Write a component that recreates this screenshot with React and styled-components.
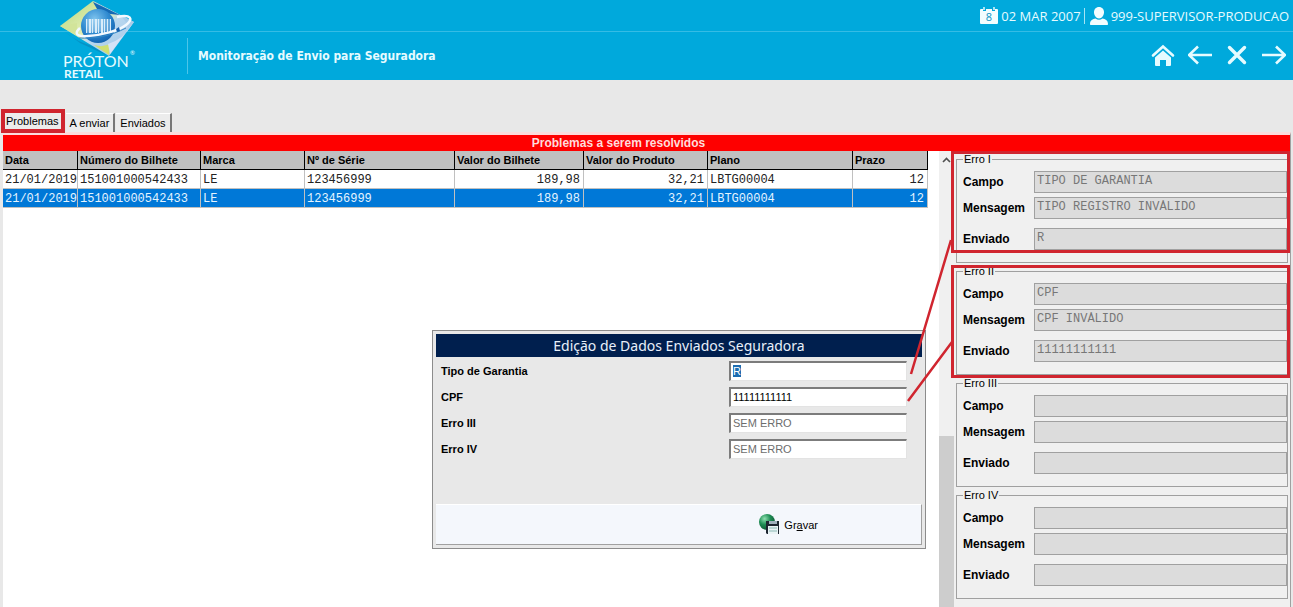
import React, { useEffect, useRef } from 'react'
import styled, { createGlobalStyle } from 'styled-components'

const GlobalStyle = createGlobalStyle`
  * {
    box-sizing: border-box;
  }
  body {
    margin: 0;
    background-color: #e8e8e8;
    color: #000;
    font-family: 'Liberation Sans', sans-serif;
    font-size: 11px;
  }
  button,
  input {
    margin: 0;
    font-family: inherit;
    font-size: inherit;
  }
`

const Page = styled.div`
  display: flex;
  flex-direction: column;
  height: 100vh;
  overflow: hidden;
`

/* header */

const Header = styled.header`
  display: grid;
  grid-template-columns: 187px 1fr;
  flex: none;
  height: 80px;
  background: linear-gradient(#35bce5, #35bce5) 0 31px / 100% 1px no-repeat #00a9dc;
  color: #e6fbff;
  font-family: 'Open Sans', sans-serif;
`

const Brand = styled.div`
  padding-left: 58px;
`

const HeaderRows = styled.div`
  display: grid;
  grid-template-rows: 32px 48px;
`

const Status = styled.div`
  display: flex;
  align-items: center;
  justify-content: flex-end;
  gap: 3px;
  padding-right: 4px;
  font-size: 13px;
  white-space: nowrap;
`

const Divider = styled.span`
  width: 1px;
  height: 16px;
  margin-right: 2px;
  background-color: #a5e4f5;
`

const TitleRow = styled.div`
  display: flex;
  align-items: center;
  justify-content: space-between;
  padding-right: 7px;
`

const Title = styled.h1`
  display: flex;
  align-items: center;
  height: 36px;
  margin: 0;
  padding-left: 10px;
  border-left: 1px solid #4cc5e9;
  font-family: 'DejaVu Sans Condensed', 'Noto Sans', sans-serif;
  font-size: 12px;
  font-weight: 700;
`

const Nav = styled.nav`
  display: flex;
  gap: 13px;
`

const IconButton = styled.button`
  display: flex;
  width: 24px;
  height: 24px;
  padding: 0;
  border: 0;
  background: none;
  color: #e6fbff;
  cursor: pointer;
`

/* tabs */

const Tabs = styled.div`
  display: flex;
  flex: none;
  align-items: flex-end;
  height: 52px;
  padding-left: 2px;
`

const Tab = styled.button`
  position: relative;
  height: ${props => (props.$active ? 23 : 19)}px;
  padding: 0 4px;
  border: 0;
  border-top: 1px solid #fff;
  border-right: 2px solid #777;
  margin-right: 1px;
  background-color: #ececec;
  color: #000;
`

const Marker = styled.span`
  position: absolute;
  top: ${props => props.$top}px;
  bottom: ${props => props.$bottom}px;
  left: ${props => props.$left}px;
  right: -2px;
  border: ${props => props.$weight || 3}px solid #d0252f;
  pointer-events: none;
`

/* main area */

const Sheet = styled.main`
  display: flex;
  flex-direction: column;
  flex: 1;
  min-height: 0;
  margin: 0 2px 0 3px;
  border-top: 3px solid #fbdcdc;
  border-right: 1px solid #a0a0a0;
`

const Banner = styled.h2`
  flex: none;
  height: 16px;
  margin: 0;
  padding-right: 56px;
  background-color: #fe0000;
  color: #ffdcdc;
  font-size: 12px;
  line-height: 16px;
  text-align: center;
`

const Columns = styled.div`
  position: relative;
  display: grid;
  grid-template-columns: 1fr 15px 336px;
  flex: 1;
  min-height: 0;
`

const TableArea = styled.div`
  min-width: 0;
  background-color: #fff;
`

const Table = styled.table`
  width: 925px;
  border-collapse: separate;
  border-spacing: 0;
  table-layout: fixed;
`

const Th = styled.th`
  width: ${props => props.$width}px;
  height: 19px;
  padding: 0 0 0 2px;
  border-right: 1px solid #000;
  border-bottom: 1px solid #000;
  background-color: #c0c0c0;
  line-height: 16px;
  text-align: left;
  white-space: nowrap;
`

const Td = styled.td`
  height: 19px;
  padding: 2px ${props => (props.$right ? 3 : 0)}px 0 2px;
  border-right: 1px solid #c0c0c0;
  border-bottom: 1px solid #c0c0c0;
  font-family: 'Liberation Mono', monospace;
  font-size: 12px;
  line-height: 16px;
  text-align: ${props => (props.$right ? 'right' : 'left')};
  white-space: nowrap;
`

const Row = styled.tr`
  background-color: ${props => (props.$selected ? '#0078d7' : '#fff')};
  color: ${props => (props.$selected ? '#e4f4ff' : '#222')};
`

const Scrollbar = styled.div`
  display: flex;
  flex-direction: column;
  background-color: #f0f0f0;
`

const ScrollUp = styled.button`
  display: flex;
  align-items: center;
  justify-content: center;
  height: 17px;
  padding: 0;
  border: 0;
  background: none;
`

const Track = styled.div`
  flex: 268;
`

const Thumb = styled.div`
  flex: 171;
  background-color: #cdcdcd;
`

const Errors = styled.aside`
  position: relative;
  display: flex;
  flex-direction: column;
  gap: 1px;
  min-height: 0;
  padding: 1px 2px;
  background-color: #f0f0f0;
`

const GroupBox = styled.div`
  position: relative;
`

const Group = styled.fieldset`
  display: grid;
  grid-template-columns: 71px 1fr;
  grid-template-rows: 22px 22px 27px;
  row-gap: 4px;
  align-items: center;
  min-width: 0;
  margin: 0;
  padding: 5px 0 12px 6px;
  border: 1px solid #a0a0a0;
`

const Legend = styled.legend`
  padding: 0 1px;
  line-height: 14px;
`

const GroupLabel = styled.label`
  margin-top: ${props => (props.$last ? 5 : 0)}px;
  font-size: 12px;
  font-weight: 700;
`

const GroupInput = styled.input`
  width: 100%;
  height: 22px;
  margin-top: ${props => (props.$last ? 5 : 0)}px;
  padding: 0 2px 2px;
  border: 1px solid #a0a0a0;
  background-color: #dcdcdc;
  color: #777;
  font-family: 'Liberation Mono', monospace;
  font-size: 12px;
`

const Connectors = styled.svg`
  position: absolute;
  top: 84px;
  left: -49px;
  z-index: 2;
  pointer-events: none;
`

/* dialog */

const Dialog = styled.section`
  position: absolute;
  top: 179px;
  right: 364px;
  z-index: 1;
  display: flex;
  flex-direction: column;
  width: 494px;
  padding: 3px;
  border: 1px solid #8c8c8c;
  background-color: #e8e8e8;
`

const DialogTitle = styled.h3`
  margin: 0;
  background-color: #001f4e;
  color: #e8f0fa;
  font-family: 'Noto Sans', sans-serif;
  font-size: 14px;
  font-weight: 400;
  line-height: 23px;
  text-align: center;
`

const Form = styled.div`
  display: grid;
  grid-template-columns: 1fr 178px;
  grid-auto-rows: 20px;
  row-gap: 6px;
  align-items: center;
  height: 147px;
  padding: 4px 15px 0 5px;
`

const FormLabel = styled.label`
  font-weight: 700;
`

const FormInput = styled.input`
  width: 100%;
  height: 20px;
  padding: 0 2px 1px;
  border: 1px solid #e3e3e3;
  border-top: 2px solid #7c7c7c;
  border-left: 2px solid #7c7c7c;
  background-color: #fff;
  color: #000;
  outline: none;
  &::placeholder {
    color: #6d6d6d;
    opacity: 1;
  }
  &::selection {
    background-color: #1c6cb0;
    color: #fff;
  }
`

const DialogFooter = styled.div`
  display: flex;
  align-items: center;
  justify-content: flex-end;
  height: 41px;
  padding-right: 103px;
  border-top: 1px solid #fff;
  border-right: 1px solid #a0a0a0;
  border-bottom: 1px solid #a0a0a0;
  background-color: #f4f7fc;
`

const SaveButton = styled.button`
  display: flex;
  align-items: center;
  gap: 4px;
  padding: 0;
  border: 0;
  background: none;
  color: #000;
`

const Logo = () => (
  <svg width="80" height="80" viewBox="0 0 80 80" aria-label="Próton Retail">
    <defs>
      <linearGradient id="tile" x1="0" y1="0" x2="1" y2="1">
        <stop offset="0" stopColor="#b4d67c" />
        <stop offset="0.45" stopColor="#e4efb4" />
        <stop offset="0.55" stopColor="#b9d8ef" />
        <stop offset="1" stopColor="#9fc3e8" />
      </linearGradient>
      <radialGradient id="globe" cx="0.4" cy="0.3" r="0.75">
        <stop offset="0" stopColor="#7fc4ee" />
        <stop offset="0.55" stopColor="#2f8ad0" />
        <stop offset="1" stopColor="#0f5fae" />
      </radialGradient>
    </defs>
    <path d="M6 31 Q18 42 38 47 L48 55 L22 43 Z" fill="#0684b8" opacity="0.6" />
    <path d="M35 1 L76 22 L51 56 L2 26 Z" fill="url(#tile)" />
    <path d="M35 1 L76 22 L71 29 Q66 12 44 9 Z" fill="#a9cdea" />
    <path d="M35 2 L62 15 L52 14 L39 9 Z" fill="#1569b4" />
    <path d="M51 55 L36 45 Q46 48 53 43 Z" fill="#cfdf72" />
    <path d="M52 54 L74 24 Q66 39 50 44 Z" fill="#d5e2f7" />
    <path d="M2 26 L19 23 Q18 34 25 39 Z" fill="#d2e49a" />
    <circle cx="40" cy="26" r="17" fill="url(#globe)" />
    <g fill="#d9edfa">
      <path d="M28 19h1v14h-1zM31 19h2v14h-2zM34 19h1v14h-1zM37 19h2v14h-2zM40 19h1v14h-1zM43 19h2v14h-2zM46 19h1v14h-1zM49 19h1v13h-1zM52 19h1v12h-1z" />
      <path d="M28 19h25v12l-25 2z" opacity="0.35" />
    </g>
    <path
      d="M22 28 C16 33 18 37 30 36 C44 35 60 31 68 25 C76 19 73 14 59 17"
      fill="none"
      stroke="#f2f9ff"
      strokeWidth="2.5"
    />
    <path d="M21 38 C36 39 53 36 68 28" fill="none" stroke="#3488c6" strokeWidth="1" />
    <path d="M58 29 l3 -2 l1 4 l-3 1 z" fill="#135fae" />
    <text x="5" y="67" fill="#e6fbff" fontFamily="Lato, sans-serif" fontSize="16">
      PRÓTON
    </text>
    <text x="72" y="55" fill="#e6fbff" fontFamily="Lato, sans-serif" fontSize="6">
      ®
    </text>
    <text x="6" y="78" fill="#e6fbff" fontFamily="Lato, sans-serif" fontSize="12" fontWeight="700">
      RETAIL
    </text>
  </svg>
)

const CalendarIcon = () => (
  <svg width="18" height="18" viewBox="0 0 18 18">
    <path
      d="M1 2h2v2h3V2h6v2h3V2h2q1 0 1 1v13q0 1-1 1H1q-1 0-1-1V3q0-1 1-1z"
      fill="#f2fdff"
    />
    <path d="M4 0v3M14 0v3" stroke="#f2fdff" strokeWidth="1.4" />
    <text x="9" y="14" fill="#0a93c4" fontFamily="'Open Sans', sans-serif" fontSize="11" textAnchor="middle">
      8
    </text>
  </svg>
)

const UserIcon = () => (
  <svg width="18" height="18" viewBox="0 0 18 18" fill="#f2fdff">
    <path d="M9 0c3.2 0 5 2.3 5 5.3 0 3-2.1 6.2-5 6.2S4 8.3 4 5.3C4 2.3 5.8 0 9 0z" />
    <path d="M1 18c-.8 0-1-.5-1-1 0-4 3-5 5.5-5.5C7.5 13.2 10.5 13.2 12.5 11.5 15 12 18 13 18 17c0 .5-.2 1-1 1z" />
  </svg>
)

const HomeIcon = () => (
  <svg width="24" height="24" viewBox="0 0 24 24">
    <path d="M2 11.5L12 2.5L22 11.5" fill="none" stroke="currentColor" strokeWidth="2.6" strokeLinecap="round" />
    <path d="M4 13.5L12 6.5L20 13.5V21q0 1-1 1H15V16H9V22H5q-1 0-1-1Z" fill="currentColor" />
  </svg>
)

const ArrowIcon = ({ right }) => (
  <svg width="24" height="24" viewBox="0 0 24 24" fill="none" stroke="currentColor" strokeWidth="2.6">
    <path d={right ? 'M0 11H23M14 2.5L23 11L14 19.5' : 'M24 11H1M10 2.5L1 11L10 19.5'} />
  </svg>
)

const CloseIcon = () => (
  <svg width="24" height="24" viewBox="0 0 24 24" stroke="currentColor" strokeWidth="3.4" strokeLinecap="round">
    <path d="M4.5 3.5L19.5 18.5M19.5 3.5L4.5 18.5" />
  </svg>
)

const SaveIcon = () => (
  <svg width="21" height="21" viewBox="0 0 21 21">
    <defs>
      <radialGradient id="ball" cx="0.35" cy="0.3" r="0.8">
        <stop offset="0" stopColor="#8fe0b0" />
        <stop offset="0.45" stopColor="#1f8e55" />
        <stop offset="1" stopColor="#0a4a2b" />
      </radialGradient>
    </defs>
    <circle cx="8" cy="8" r="8" fill="url(#ball)" />
    <path d="M7 7h13v13H8l-1-1z" fill="#1d2630" />
    <path d="M10 7h8v3h-8z" fill="#9fb0bc" />
    <path d="M9 12h10v8H9z" fill="#e9f3f5" />
    <path d="M10 14h8M10 17h8" stroke="#8db9b5" />
  </svg>
)

const columns = [
  { title: 'Data', width: 75 },
  { title: 'Número do Bilhete', width: 123 },
  { title: 'Marca', width: 104 },
  { title: 'Nº de Série', width: 150 },
  { title: 'Valor do Bilhete', width: 129, right: true },
  { title: 'Valor do Produto', width: 124, right: true },
  { title: 'Plano', width: 145 },
  { title: 'Prazo', width: 75, right: true },
]

const ticket = ['21/01/2019', '151001000542433', 'LE', '123456999', '189,98', '32,21', 'LBTG00004', '12']
const rows = [ticket, ticket]

const errors = [
  {
    title: 'Erro I',
    values: ['TIPO DE GARANTIA', 'TIPO REGISTRO INVÁLIDO', 'R'],
    marker: { top: -1, bottom: 10 },
  },
  {
    title: 'Erro II',
    values: ['CPF', 'CPF INVÁLIDO', '11111111111'],
    marker: { top: 1, bottom: -3 },
  },
  { title: 'Erro III', values: ['', '', ''] },
  { title: 'Erro IV', values: ['', '', ''] },
]

const errorFields = ['Campo', 'Mensagem', 'Enviado']

const ErrorGroup = ({ id, title, values, marker }) => (
  <GroupBox>
    <Group>
      <Legend>{title}</Legend>
      {errorFields.map((field, i) => (
        <React.Fragment key={field}>
          <GroupLabel htmlFor={`${id}-${field}`} $last={i === 2}>
            {field}
          </GroupLabel>
          <GroupInput id={`${id}-${field}`} value={values[i]} readOnly $last={i === 2} />
        </React.Fragment>
      ))}
    </Group>
    {marker && <Marker $top={marker.top} $bottom={marker.bottom} $left={-5} />}
  </GroupBox>
)

const EditDialog = () => {
  const first = useRef(null)

  useEffect(() => {
    first.current.focus()
    first.current.select()
  }, [])

  return (
    <Dialog role="dialog" aria-labelledby="edit-title">
      <DialogTitle id="edit-title">Edição de Dados Enviados Seguradora</DialogTitle>
      <Form>
        <FormLabel htmlFor="tipo">Tipo de Garantia</FormLabel>
        <FormInput id="tipo" ref={first} defaultValue="R" />
        <FormLabel htmlFor="cpf">CPF</FormLabel>
        <FormInput id="cpf" defaultValue="11111111111" />
        <FormLabel htmlFor="erro3">Erro III</FormLabel>
        <FormInput id="erro3" placeholder="SEM ERRO" />
        <FormLabel htmlFor="erro4">Erro IV</FormLabel>
        <FormInput id="erro4" placeholder="SEM ERRO" />
      </Form>
      <DialogFooter>
        <SaveButton>
          <SaveIcon />
          <span>
            Gr<u>a</u>var
          </span>
        </SaveButton>
      </DialogFooter>
    </Dialog>
  )
}

const App = () => (
  <Page>
    <GlobalStyle />
    <Header>
      <Brand>
        <Logo />
      </Brand>
      <HeaderRows>
        <Status>
          <CalendarIcon />
          <span>02 MAR 2007</span>
          <Divider />
          <UserIcon />
          <span>999-SUPERVISOR-PRODUCAO</span>
        </Status>
        <TitleRow>
          <Title>Monitoração de Envio para Seguradora</Title>
          <Nav>
            <IconButton aria-label="Início">
              <HomeIcon />
            </IconButton>
            <IconButton aria-label="Voltar">
              <ArrowIcon />
            </IconButton>
            <IconButton aria-label="Fechar">
              <CloseIcon />
            </IconButton>
            <IconButton aria-label="Avançar">
              <ArrowIcon right />
            </IconButton>
          </Nav>
        </TitleRow>
      </HeaderRows>
    </Header>

    <Tabs role="tablist">
      <Tab role="tab" aria-selected="true" $active>
        Problemas
        <Marker $top={-1} $bottom={-1} $left={-1} $weight={4} />
      </Tab>
      <Tab role="tab" aria-selected="false">
        A enviar
      </Tab>
      <Tab role="tab" aria-selected="false">
        Enviados
      </Tab>
    </Tabs>

    <Sheet>
      <Banner>Problemas a serem resolvidos</Banner>
      <Columns>
        <TableArea>
          <Table>
            <thead>
              <tr>
                {columns.map(column => (
                  <Th key={column.title} $width={column.width}>
                    {column.title}
                  </Th>
                ))}
              </tr>
            </thead>
            <tbody>
              {rows.map((row, i) => (
                <Row key={i} $selected={i === 1}>
                  {row.map((cell, j) => (
                    <Td key={j} $right={columns[j].right}>
                      {cell}
                    </Td>
                  ))}
                </Row>
              ))}
            </tbody>
          </Table>
        </TableArea>
        <Scrollbar>
          <ScrollUp aria-label="Rolar para cima">
            <svg width="9" height="6" viewBox="0 0 9 6" fill="none" stroke="#505050" strokeWidth="1.6">
              <path d="M1 5L4.5 1.5L8 5" />
            </svg>
          </ScrollUp>
          <Track />
          <Thumb />
        </Scrollbar>
        <Errors>
          {errors.map((error, i) => (
            <ErrorGroup key={error.title} id={`erro-${i}`} {...error} />
          ))}
          <Connectors width="50" height="170" viewBox="0 0 50 170" stroke="#d0252f" strokeWidth="2.5">
            <path d="M6 139L46 5M3 166L47 107" />
          </Connectors>
        </Errors>
        <EditDialog />
      </Columns>
    </Sheet>
  </Page>
)

export default App
